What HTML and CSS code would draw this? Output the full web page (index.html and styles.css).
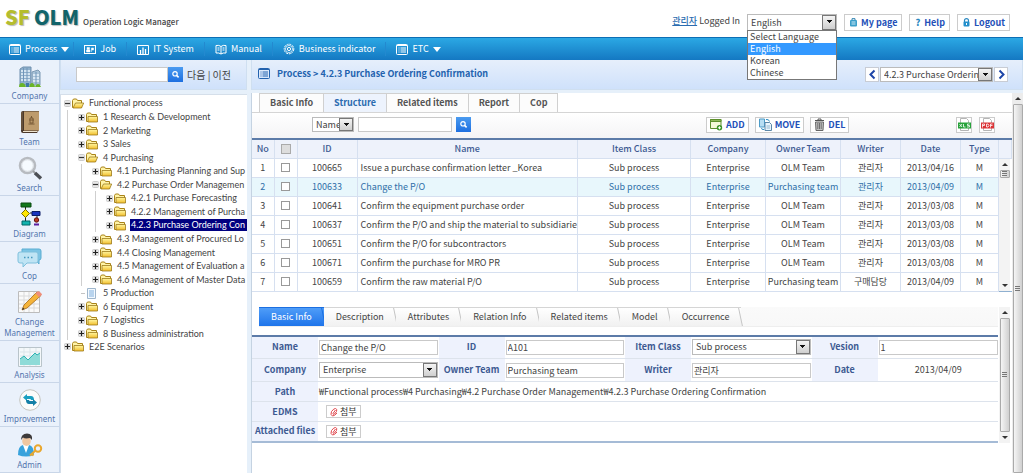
FILE: index.html
```html
<!DOCTYPE html>
<html lang="en">
<head>
<meta charset="utf-8">
<title>SF OLM - Operation Logic Manager</title>
<link rel="stylesheet" href="styles.css">
</head>
<body>
<svg class="defs" aria-hidden="true">
  <defs>
    <linearGradient id="gold" x1="0" y1="0" x2="0" y2="1"><stop offset="0" stop-color="#fff6a0"/><stop offset="1" stop-color="#f2bd2a"/></linearGradient>
  </defs>
  <symbol id="i-list" viewBox="0 0 12 11"><rect x=".5" y=".5" width="11" height="10" rx="1" fill="none" stroke="currentColor"/><path d="M1 1.5h10M2.5 4h1M2.5 6h1M2.5 8h1M4.500 4h5.500M4.500 6h5.500M4.500 8h5.500" stroke="currentColor" fill="none"/></symbol>
  <symbol id="i-job" viewBox="0 0 12 11"><rect x=".5" y="1.500" width="11" height="8" fill="none" stroke="currentColor"/><path d="M2.500 8V6h3.500v2zM3 3.500h2.500v2H3zM7.500 8V4h2v2h-2" fill="currentColor" stroke="currentColor" stroke-width=".5"/></symbol>
  <symbol id="i-it" viewBox="0 0 12 11"><path d="M.5 10.500V1.500H11.500V10.500z" fill="none" stroke="currentColor"/><path d="M3.500 10V6M6 10V3.500M8.500 10V5" stroke="currentColor" stroke-width="1.300"/></symbol>
  <symbol id="i-book" viewBox="0 0 12 11"><path d="M6 2.500Q4 .8 1 1.500V9Q4 8.500 6 10Q8 8.500 11 9V1.500Q8 .8 6 2.500V10M2.500 4h2M2.500 6h2M7.500 4h2M7.500 6h2" fill="none" stroke="currentColor"/></symbol>
  <symbol id="i-gear" viewBox="0 0 12 12"><circle cx="6" cy="6" r="4.800" fill="none" stroke="currentColor" stroke-dasharray="2 .8"/><circle cx="6" cy="6" r="3.600" fill="none" stroke="currentColor" stroke-width=".7"/><circle cx="6" cy="6" r="1.600" fill="none" stroke="currentColor"/></symbol>
  <symbol id="i-find" viewBox="0 0 15 15"><circle cx="7" cy="6.800" r="2.200" fill="none" stroke="#fff" stroke-width="1.200"/><path d="M8.600 8.400l2 2" stroke="#fff" stroke-width="1.500"/></symbol>
  <symbol id="i-folder" viewBox="0 0 12 11"><path d="M.5 9.500V2.500L1.500 1H4.500L5.500 2.500H10.500V9.500z" fill="#fff3a6" stroke="#a98318"/><path d="M2 4.500H11.500V10H2z" fill="url(#gold)" stroke="#9c7a1c" stroke-width=".8"/></symbol>
  <symbol id="i-open" viewBox="0 0 12 11"><path d="M.5 9.500V2.500L1.500 1H4.500L5.500 2.500H9.500V9.500z" fill="#fff3a6" stroke="#a98318"/><path d="M1 10L3.500 5H11.700L9.500 10z" fill="url(#gold)" stroke="#9c7a1c" stroke-width=".8"/></symbol>
  <symbol id="i-doc" viewBox="0 0 12 11"><path d="M1.500.5h8v10h-8z" fill="#f3f9ff" stroke="#9fb6cc"/><path d="M3 2h5v7H3z" fill="#b9d4ee"/></symbol>
  <symbol id="i-plus" viewBox="0 0 7 7"><rect x=".5" y=".5" width="6" height="6" rx="1" fill="#e8e8e8" stroke="#ccc"/><path d="M1 3.500h5M3.500 1v5" stroke="#222" stroke-width="1.200"/></symbol>
  <symbol id="i-minus" viewBox="0 0 7 7"><rect x=".5" y=".5" width="6" height="6" rx="1" fill="#e8e8e8" stroke="#ccc"/><path d="M1 3.500h5" stroke="#333" stroke-width="1.200"/></symbol>
  <symbol id="i-clip" viewBox="0 0 8 10"><path d="M5.500 3L3 6.500Q3 8 4.500 7L6.500 4.500Q7.500 2 5.500 1.500Q4 1.200 1.500 4.500Q0 8 2.500 9Q4.500 9 7 6" fill="none" stroke="#e0474d" stroke-width="1"/></symbol>
</svg>

<header class="top">
  <h1 class="logo"><span class="logo-sf">SF</span> <span class="logo-olm">OLM</span> <small>Operation Logic Manager</small></h1>
  <div class="account">
    <p class="user"><a href="#">관리자</a> Logged In</p>
    <div class="pick lang">
      <select aria-label="Language"><option>English</option><option>Select Language</option><option>Korean</option><option>Chinese</option></select>
      <ul class="menu"><li>Select Language</li><li class="on">English</li><li>Korean</li><li>Chinese</li></ul>
    </div>
    <button class="btn"><svg viewBox="0 0 9 9" width="9" height="9"><rect x="1" y="2" width="7" height="6.500" rx="1" fill="#3b9fca"/><path d="M3 2V.7h3V2" fill="none" stroke="#287fae"/><path d="M2.500 4h4M2.500 6h4" stroke="#cdeaf6"/></svg>My page</button>
    <button class="btn help"><b class="q">?</b>Help</button>
    <button class="btn"><svg viewBox="0 0 9 9" width="9" height="9"><path d="M2.500 4V2.500Q2.500 .7 4.500 .7T6.500 2.500V4" fill="none" stroke="#2a87c0" stroke-width="1.200"/><rect x="1.500" y="3.500" width="6" height="5" rx="1" fill="#2490cc"/><path d="M4.500 5v2" stroke="#fff"/></svg>Logout</button>
  </div>
</header>

<nav class="nav">
  <a href="#"><svg width="12" height="11"><use href="#i-list"/></svg>Process<i class="caret"></i></a>
  <a href="#"><svg width="12" height="11"><use href="#i-job"/></svg>Job</a>
  <a href="#"><svg width="12" height="11"><use href="#i-it"/></svg>IT System</a>
  <a href="#"><svg width="12" height="11"><use href="#i-book"/></svg>Manual</a>
  <a href="#"><svg width="12" height="12"><use href="#i-gear"/></svg>Business indicator</a>
  <a href="#"><svg width="12" height="11"><use href="#i-list"/></svg>ETC<i class="caret"></i></a>
</nav>

<div class="body">
  <aside class="side">
    <a href="#"><svg width="24" height="22" viewBox="0 0 24 22"><path d="M2 3L5 1H13V19H2z" fill="#8fb0cc" stroke="#6f8fae"/><path d="M14 6L20 4L22 6V19H14z" fill="#a9c3d8" stroke="#7d9ab4"/><path d="M3 5h9M3 8h9M3 11h9M3 14h9M15 9h6M15 12h6M15 15h6" stroke="#eaf5fd" stroke-width="1.500"/><path d="M5.500 2v14M9 2v14M18 6v12" stroke="#6f94b8"/><path d="M1 21q0-4 3-4t4 4zM11 21q1-4 3-4t3 4zM17 21q1-3 3-3t3 3z" fill="#6ab529"/><path d="M8 17h3v4H8z" fill="#3f78a8"/></svg>Company</a>
    <a href="#"><svg width="22" height="24" viewBox="0 0 22 24"><path d="M2 3Q2 1 4 1H20V20L18 23H4Q2 23 2 21z" fill="#4a382a"/><path d="M5 1.500H20V20.500H5z" fill="#bd9b6d"/><path d="M3 2v18" stroke="#80694d"/><path d="M4 21.500H18.500" stroke="#efe5d0"/><path d="M12.500 6v2M10 10h5M11 8h3v5h-3zM9.500 14h6" stroke="#765936" fill="none"/></svg>Team</a>
    <a href="#"><svg width="26" height="24" viewBox="0 0 26 24"><circle cx="10.500" cy="9.500" r="7.500" fill="#f6fbff" stroke="#b7bbc0" stroke-width="2.600"/><circle cx="10.500" cy="9.500" r="5.800" fill="none" stroke="#d9dde2"/><path d="M16 15l3 3" stroke="#9a9da0" stroke-width="2"/><path d="M18 17l6 5.500" stroke="#4c4f54" stroke-width="3.400"/></svg>Search</a>
    <a href="#"><svg width="22" height="24" viewBox="0 0 22 24"><path d="M6.500 4v16M11 11h7v9" fill="none" stroke="#222"/><path d="M2 1h10v4H2z" fill="#11771a" stroke="#0a4a10"/><path d="M6.500 7.500L10.500 11.500L6.500 15.500L2.500 11.500z" fill="#ffe600" stroke="#776c00"/><path d="M13 9.500h8v4h-8z" fill="#1834c0" stroke="#0a1a66"/><path d="M3 19h8v4H3z" fill="#12b3ae" stroke="#066"/><circle cx="17.500" cy="18" r="2.200" fill="#b83a22" stroke="#611"/><path d="M15 21.500h5v2h-5z" fill="#5a1fa0"/></svg>Diagram</a>
    <a href="#"><svg width="26" height="20" viewBox="0 0 26 20"><path d="M5 1H22Q24 1 24 3V10Q24 12 22 12V16L18 12H5z" fill="#7cc4e4" stroke="#5badd2"/><path d="M3 4H19Q21 4 21 6V13Q21 15 19 15H10L6 19V15H3Q1 15 1 13V6Q1 4 3 4z" fill="#bfe4f4" stroke="#7fc0dc"/><path d="M7 9.500h1.500M10.500 9.500h1.500M14 9.500h1.500" stroke="#4698bd" stroke-width="1.600"/></svg>Cop</a>
    <a href="#"><svg width="26" height="24" viewBox="0 0 26 24"><path d="M1.500 1.500h21v21h-21z" fill="#fafafa" stroke="#bcbcbc"/><path d="M2 6h20M2 10h20M2 14h20M2 18h20M7 2v20M12 2v20M17 2v20" stroke="#dadada"/><path d="M5 20L7 15L20 2L24 5.500L10 18z" fill="#f5b43a" stroke="#a66a1a" stroke-width=".8"/><path d="M18.500 3.500L20.500 1.500Q22 .8 24 3T24 5.500L22 7z" fill="#ef8e7c"/><path d="M5 20l1-2.500l1.500 1.500z" fill="#333"/></svg>Change Management</a>
    <a href="#"><svg width="24" height="20" viewBox="0 0 24 20"><path d="M.5 .5h23v19H.5z" fill="#f4f8fa" stroke="#b9c4ca"/><path d="M2 5h20M2 9h20M6 1v18M12 1v18M18 1v18" stroke="#dbe5ea"/><path d="M2 18V12L6 9L10 13L17 6L19 8L22 6V18z" fill="#8edbd8"/><path d="M2 12L6 9L10 13L17 6L19 8L22 6" fill="none" stroke="#2eb2b2"/></svg>Analysis</a>
    <a href="#"><svg width="24" height="22" viewBox="0 0 24 22"><circle cx="12" cy="11" r="10.300" fill="#fcfcfa" stroke="#c5c5bf"/><path d="M5 8.500L9 5V7H13Q16 7 16 11H13Q13 10 12 10H9V12z" fill="#1ba0c0"/><path d="M19 13.500L15 17V15H11Q8 15 8 11H11Q11 12 12 12H15V10z" fill="#147fa6"/></svg>Improvement</a>
    <a href="#"><svg width="26" height="24" viewBox="0 0 26 24"><path d="M1 22Q1 13 6 12H12Q17 13 17 22Q9 25 1 22z" fill="#38a2dc"/><path d="M6 12L9 20L12 12z" fill="#fff"/><ellipse cx="9.500" cy="8" rx="4.300" ry="5" fill="#f1c7a0"/><path d="M4 7Q4 .5 10 .5T15 7L13 5Q8 6 6 4.500z" fill="#3d3a3a"/><circle cx="21" cy="15.500" r="3.200" fill="none" stroke="#e9a72e" stroke-width="2"/><path d="M18.500 17.500L13 22.500M15 21l1.500 1.500" stroke="#e9a72e" stroke-width="2"/></svg>Admin</a>
  </aside>

  <section class="explorer">
    <form class="bar tree-find">
      <input type="text" aria-label="Find in tree"><button class="find" type="button" aria-label="Find"><svg width="15" height="15"><use href="#i-find"/></svg></button>
      <span class="steps"><a href="#">다음</a> | <a href="#">이전</a></span>
    </form>
    <div class="tree">
      <ul>
        <li><div class="node"><svg class="tw"><use href="#i-minus"/></svg><svg class="fd"><use href="#i-open"/></svg><span>Functional process</span></div>
          <ul>
            <li><div class="node"><svg class="tw"><use href="#i-plus"/></svg><svg class="fd"><use href="#i-folder"/></svg><span>1 Research &amp; Development</span></div></li>
            <li><div class="node"><svg class="tw"><use href="#i-plus"/></svg><svg class="fd"><use href="#i-folder"/></svg><span>2 Marketing</span></div></li>
            <li><div class="node"><svg class="tw"><use href="#i-plus"/></svg><svg class="fd"><use href="#i-folder"/></svg><span>3 Sales</span></div></li>
            <li><div class="node"><svg class="tw"><use href="#i-minus"/></svg><svg class="fd"><use href="#i-open"/></svg><span>4 Purchasing</span></div>
              <ul>
                <li><div class="node"><svg class="tw"><use href="#i-plus"/></svg><svg class="fd"><use href="#i-folder"/></svg><span>4.1 Purchasing Planning and Sup</span></div></li>
                <li><div class="node"><svg class="tw"><use href="#i-minus"/></svg><svg class="fd"><use href="#i-open"/></svg><span>4.2 Purchase Order Managemen</span></div>
                  <ul>
                    <li><div class="node"><svg class="tw"><use href="#i-plus"/></svg><svg class="fd"><use href="#i-folder"/></svg><span>4.2.1 Purchase Forecasting</span></div></li>
                    <li><div class="node"><svg class="tw"><use href="#i-plus"/></svg><svg class="fd"><use href="#i-folder"/></svg><span>4.2.2 Management of Purcha</span></div></li>
                    <li><div class="node"><svg class="tw"><use href="#i-plus"/></svg><svg class="fd"><use href="#i-folder"/></svg><span class="sel">4.2.3 Purchase Ordering Con</span></div></li>
                  </ul>
                </li>
                <li><div class="node"><svg class="tw"><use href="#i-plus"/></svg><svg class="fd"><use href="#i-folder"/></svg><span>4.3 Management of Procured Lo</span></div></li>
                <li><div class="node"><svg class="tw"><use href="#i-plus"/></svg><svg class="fd"><use href="#i-folder"/></svg><span>4.4 Closing Management</span></div></li>
                <li><div class="node"><svg class="tw"><use href="#i-plus"/></svg><svg class="fd"><use href="#i-folder"/></svg><span>4.5 Management of Evaluation a</span></div></li>
                <li><div class="node"><svg class="tw"><use href="#i-plus"/></svg><svg class="fd"><use href="#i-folder"/></svg><span>4.6 Management of Master Data</span></div></li>
              </ul>
            </li>
            <li><div class="node"><svg class="tw" viewBox="0 0 7 7"><path d="M3 3.500h4" stroke="#c4c4c4"/></svg><svg class="fd"><use href="#i-doc"/></svg><span>5 Production</span></div></li>
            <li><div class="node"><svg class="tw"><use href="#i-plus"/></svg><svg class="fd"><use href="#i-folder"/></svg><span>6 Equipment</span></div></li>
            <li><div class="node"><svg class="tw"><use href="#i-plus"/></svg><svg class="fd"><use href="#i-folder"/></svg><span>7 Logistics</span></div></li>
            <li><div class="node"><svg class="tw"><use href="#i-plus"/></svg><svg class="fd"><use href="#i-folder"/></svg><span>8 Business administration</span></div></li>
          </ul>
        </li>
        <li><div class="node"><svg class="tw"><use href="#i-plus"/></svg><svg class="fd"><use href="#i-folder"/></svg><span>E2E Scenarios</span></div></li>
      </ul>
    </div>
  </section>

  <main class="main">
    <div class="bar crumb">
      <h2><svg width="12" height="11"><use href="#i-list"/></svg>Process &gt; 4.2.3 Purchase Ordering Confirmation</h2>
      <div class="pager">
        <button class="arrow" aria-label="Previous"><svg width="9" height="11" viewBox="0 0 9 11"><path d="M6.500 1.500L2.500 5.500L6.500 9.500" fill="none" stroke="#1d45a8" stroke-width="2"/></svg></button>
        <div class="pick item-pick"><select aria-label="Item"><option>4.2.3 Purchase Ordering Confirmation</option></select></div>
        <button class="arrow" aria-label="Next"><svg width="9" height="11" viewBox="0 0 9 11"><path d="M2.500 1.500L6.500 5.500L2.500 9.500" fill="none" stroke="#1d45a8" stroke-width="2"/></svg></button>
      </div>
    </div>

    <div class="work">
      <div class="content">
        <div class="tabs" role="tablist">
          <button role="tab">Basic Info</button><button role="tab" class="on" aria-selected="true">Structure</button><button role="tab">Related items</button><button role="tab">Report</button><button role="tab">Cop</button>
        </div>
        <div class="tools">
          <div class="search">
            <div class="pick field"><select aria-label="Search field"><option>Name</option></select></div>
            <input type="text" aria-label="Search text">
            <button class="find" aria-label="Search"><svg width="15" height="15"><use href="#i-find"/></svg></button>
          </div>
          <div class="actions">
            <button class="btn"><svg width="13" height="13" viewBox="0 0 13 13"><path d="M.5 1.500h10.500v9H.5z" fill="#f4f8d8" stroke="#5d8f2c"/><path d="M.5 1.500h10.500v2H.5z" fill="#8fb85a" stroke="#5d8f2c"/><circle cx="9.500" cy="9.800" r="2.700" fill="#3c9428"/><path d="M8 9.800h3M9.500 8.300v3" stroke="#fff"/></svg>ADD</button>
            <button class="btn"><svg width="13" height="13" viewBox="0 0 13 13"><path d="M.5 1h5v8h-5z" fill="#b7def3" stroke="#4d9bc7"/><path d="M6 4.500h4.500L12.500 6.500V12.500H6z" fill="#eaf5fc" stroke="#5b87a8"/><path d="M7 1.500Q10 1 10.500 3.500M5 11.500Q2.500 12 2.500 10" stroke="#2d8fc4" fill="none"/><path d="M7.500 8h3.500M7.500 10h3.500" stroke="#92b7cf"/></svg>MOVE</button>
            <button class="btn"><svg width="11" height="13" viewBox="0 0 11 13"><path d="M1 2.500h9M4 2V1h3v1" stroke="#555" fill="none"/><path d="M1.500 4h8L9 12.500H2z" fill="#c2c2c2" stroke="#666"/><path d="M3.800 5v6M5.500 5v6M7.200 5v6" stroke="#707070"/></svg>DEL</button>
          </div>
          <div class="export">
            <button class="btn" aria-label="Export XLS"><svg width="13" height="13" viewBox="0 0 13 13"><path d="M2.500.5h6l2 2V12.500h-8z" fill="#fff" stroke="#b5b5b5"/><path d="M0 4.500h13v6H0z" fill="#27a23a"/><path d="M1.500 6l2.500 3M4 6l-2.500 3M5.500 6v3h2M11.500 6H9.500v1.500h2V9H9" stroke="#fff" stroke-width=".8" fill="none"/></svg></button>
            <button class="btn" aria-label="Export PDF"><svg width="13" height="13" viewBox="0 0 13 13"><path d="M2.500.5h6l2 2V12.500h-8z" fill="#fff" stroke="#b5b5b5"/><path d="M0 4.500h13v6H0z" fill="#db3236"/><path d="M1.500 9.500V6h2v1.500h-2M5.500 6v3h1.500l1-1.500L7 6zM9.500 9.500V6h2M9.500 7.500h2" stroke="#fff" stroke-width=".8" fill="none"/></svg></button>
          </div>
        </div>

        <table class="grid">
          <colgroup><col class="w-no"><col class="w-check"><col class="w-id"><col><col class="w-class"><col class="w-co"><col class="w-co"><col class="w-writer"><col class="w-writer"><col class="w-type"><col class="w-bar"></colgroup>
          <thead><tr><th>No</th><th><input type="checkbox" class="all" aria-label="Select all"></th><th>ID</th><th>Name</th><th>Item Class</th><th>Company</th><th>Owner Team</th><th>Writer</th><th>Date</th><th>Type</th><th></th></tr></thead>
          <tbody>
            <tr><td>1</td><td><input type="checkbox" aria-label="Row 1"></td><td>100665</td><td class="name">Issue a purchase confirmation letter _Korea</td><td>Sub process</td><td>Enterprise</td><td>OLM Team</td><td>관리자</td><td>2013/04/16</td><td>M</td>
              <td class="bar-cell" rowspan="7"><div class="scroll"><i class="up"></i><i class="thumb short"></i><i class="down"></i></div></td></tr>
            <tr class="on"><td>2</td><td><input type="checkbox" aria-label="Row 2"></td><td>100633</td><td class="name">Change the P/O</td><td>Sub process</td><td>Enterprise</td><td>Purchasing team</td><td>관리자</td><td>2013/04/09</td><td>M</td></tr>
            <tr><td>3</td><td><input type="checkbox" aria-label="Row 3"></td><td>100641</td><td class="name">Confirm the equipment purchase order</td><td>Sub process</td><td>Enterprise</td><td>OLM Team</td><td>관리자</td><td>2013/03/08</td><td>M</td></tr>
            <tr><td>4</td><td><input type="checkbox" aria-label="Row 4"></td><td>100637</td><td class="name">Confirm the P/O and ship the material to subsidiarie</td><td>Sub process</td><td>Enterprise</td><td>OLM Team</td><td>관리자</td><td>2013/03/08</td><td>M</td></tr>
            <tr><td>5</td><td><input type="checkbox" aria-label="Row 5"></td><td>100651</td><td class="name">Confirm the P/O for subcontractors</td><td>Sub process</td><td>Enterprise</td><td>OLM Team</td><td>관리자</td><td>2013/03/08</td><td>M</td></tr>
            <tr><td>6</td><td><input type="checkbox" aria-label="Row 6"></td><td>100671</td><td class="name">Confirm the purchase for MRO PR</td><td>Sub process</td><td>Enterprise</td><td>OLM Team</td><td>관리자</td><td>2013/03/08</td><td>M</td></tr>
            <tr><td>7</td><td><input type="checkbox" aria-label="Row 7"></td><td>100659</td><td class="name">Confirm the raw material P/O</td><td>Sub process</td><td>Enterprise</td><td>Purchasing team</td><td>구매담당</td><td>2013/04/09</td><td>M</td></tr>
          </tbody>
        </table>

        <div class="detail">
          <div class="detail-body">
            <div class="subtabs" role="tablist">
              <button role="tab" class="on" aria-selected="true">Basic Info</button><button role="tab">Description</button><button role="tab">Attributes</button><button role="tab">Relation Info</button><button role="tab">Related items</button><button role="tab">Model</button><button role="tab">Occurrence</button>
            </div>
            <table class="form">
              <tbody>
                <tr class="tall"><th><label for="f-name">Name</label></th><td><input id="f-name" type="text" value="Change the P/O"></td><th><label for="f-id">ID</label></th><td><input id="f-id" type="text" value="A101"></td><th><label for="f-class">Item Class</label></th><td><div class="pick"><select id="f-class"><option>Sub process</option></select></div></td><th><label for="f-ver">Vesion</label></th><td><input id="f-ver" type="text" value="1"></td></tr>
                <tr class="tall"><th><label for="f-co">Company</label></th><td><div class="pick"><select id="f-co"><option>Enterprise</option></select></div></td><th><label for="f-team">Owner Team</label></th><td><input id="f-team" type="text" value="Purchasing team"></td><th><label for="f-writer">Writer</label></th><td><input id="f-writer" type="text" value="관리자"></td><th>Date</th><td class="mid">2013/04/09</td></tr>
                <tr><th>Path</th><td colspan="7">₩Functional process₩4 Purchasing₩4.2 Purchase Order Management₩4.2.3 Purchase Ordering Confirmation</td></tr>
                <tr><th>EDMS</th><td colspan="7"><button class="attach"><svg width="8" height="10"><use href="#i-clip"/></svg>첨부</button></td></tr>
                <tr><th>Attached files</th><td colspan="7"><button class="attach"><svg width="8" height="10"><use href="#i-clip"/></svg>첨부</button></td></tr>
              </tbody>
            </table>
          </div>
          <div class="scroll"><i class="up"></i><i class="thumb"></i><i class="down"></i></div>
        </div>
      </div>
      <div class="scroll outer"><i class="up"></i><i class="thumb"></i></div>
    </div>
  </main>
</div>
</body>
</html>
```

FILE: styles.css
```css
* { box-sizing: border-box; }
body {
  margin: 0;
  min-height: 100vh;
  display: flex;
  flex-direction: column;
  overflow: hidden;
  background: #fff;
  color: #444;
  font: 9px/14px "Noto Sans CJK KR", sans-serif;
}
h1, h2, p, ul { margin: 0; padding: 0; }
ul { list-style: none; }
a { color: inherit; text-decoration: none; }
svg { flex: none; display: block; }
.defs { position: absolute; width: 0; height: 0; }
button, input, select { font: inherit; color: inherit; margin: 0; border-radius: 0; }
button { padding: 0; cursor: pointer; }
input[type="text"] { height: 15px; padding: 0 1px; border: 1px solid #c9c9c9; background: #fff; min-width: 0; }

/* drop-down */
.pick { position: relative; height: 16px; }
.pick select {
  width: 100%;
  height: 100%;
  padding: 0 10px 0 3px;
  border: 1px solid #bbb;
  background: #fff;
  appearance: none;
  line-height: 14px;
}
.pick::after {
  content: "";
  position: absolute;
  top: 1px;
  right: 1px;
  bottom: 1px;
  width: 12px;
  border: 1px solid #777;
  background: linear-gradient(#111, #111) center 4px / 5px 1px no-repeat, linear-gradient(#111, #111) center 5px / 3px 1px no-repeat, linear-gradient(#111, #111) center 6px / 1px 1px no-repeat, linear-gradient(#f4f4f4, #cfcfcf);
  pointer-events: none;
}

/* header */
.top { display: flex; align-items: flex-start; justify-content: space-between; height: 37px; padding: 0 13px 0 5px; }
.logo { display: flex; align-items: baseline; gap: 4px; font-size: 20px; line-height: 34px; font-weight: 900; text-shadow: 1px 1px 1px #bbb; }
.logo-sf { color: #b5bd2e; }
.logo-olm { color: #12646a; }
.logo small { font-size: 8px; font-weight: 500; color: #444; text-shadow: none; }
.account { display: flex; gap: 7px; padding-top: 14px; }
.user a { color: #2b6cb0; font-weight: 500; text-decoration: underline; }
.lang { width: 90px; height: 17px; }
.menu {
  position: absolute;
  z-index: 2;
  top: 16px;
  left: 0;
  right: 0;
  border: 1px solid #777;
  background: #fff;
  line-height: 12px;
}
.menu li { padding: 0 2px; }
.menu .on { background: #3399ff; color: #fff; }
.btn {
  display: flex;
  align-items: center;
  gap: 3px;
  height: 17px;
  padding: 0 4px;
  border: 1px solid #ccc;
  background: #fff;
  color: #2450b8;
  font-weight: 700;
}
.help { gap: 4px; padding: 0 4px 0 5px; }
.q { color: #2a87c0; }

/* main menu */
.nav {
  display: flex;
  align-items: center;
  height: 23px;
  border-top: 1px solid #0d6fb5;
  background: linear-gradient(#2ba8e4, #1478c2);
  color: #fff;
}
.nav a { display: flex; align-items: center; gap: 4px; height: 14px; padding: 0 10px; border-right: 1px solid #2389cf; }
.nav a:first-child { padding: 0 4px 0 9px; }
.nav a:last-child { border: 0; }
.caret { border: 4px solid transparent; border-top: 5px solid #fff; border-bottom: 0; }

/* frame */
.body { flex: 1; display: grid; grid-template-columns: 60px 187px minmax(0, 1fr); background: #e6f0fa; }
.bar { display: flex; align-items: center; height: 30px; border: 1px solid #cfdff0; border-top: 0; background: linear-gradient(#e6effb, #cfe1fb); }

.side { background: #eaf1fb; border-right: 1px solid #c9d8ec; }
.side a {
  display: flex;
  flex-direction: column;
  align-items: center;
  gap: 2px;
  padding: 6px 4px 2px;
  border-bottom: 1px solid #c9d6e8;
  color: #5275ad;
  font: 8px/11px "Noto Sans", sans-serif;
  text-align: center;
}

/* tree */
.explorer { display: flex; flex-direction: column; min-width: 0; }
.tree-find { padding: 0 0 0 15px; }
.tree-find input { width: 92px; }
.find { width: 15px; height: 15px; border: 0; background: linear-gradient(#4b9bf0, #1d6fe0); }
.steps { padding-left: 4px; font-size: 10px; }
.tree { flex: 1; margin-top: 4px; padding: 1px 0 0 3px; overflow: hidden; background: #fff; border: 1px solid #d5dfea; border-width: 1px 0 0 1px; font-family: Lato, sans-serif; }
.tree ul ul { margin-left: 3px; padding-left: 10px; border-left: 1px solid #cfcfcf; }
.tree li:last-child > ul { border-color: transparent; }
.node { display: flex; align-items: center; height: 14px; white-space: nowrap; }
.tree li:nth-child(even) > .node { height: 13px; }
.tw { width: 7px; height: 7px; }
.fd { width: 12px; height: 11px; margin: 0 4px 0 1px; }
.node span { flex: 1; padding: 0 1px; line-height: 12px; }
.node .sel { background: #000080; color: #fff; }

/* work area */
.main { display: flex; flex-direction: column; padding-left: 4px; }
.crumb { justify-content: space-between; padding: 0 14px 0 6px; }
.crumb h2 { display: flex; align-items: center; gap: 7px; padding-bottom: 2px; color: #2362ae; font-size: 9px; font-weight: 700; }
.pager { display: flex; gap: 1px; }
.arrow { display: grid; place-items: center; width: 14px; height: 15px; border: 1px solid #c8ccd4; background: #fff; }
.item-pick { width: 113px; height: 15px; }
.work { flex: 1; display: flex; margin-top: 3px; border-left: 1px solid #c5d3e2; background: #fff; }
.content { flex: 1; min-width: 0; }
.tabs { display: flex; height: 20px; padding-left: 7px; border-bottom: 1px solid #d5d5d5; }
.tabs button { padding: 0 10px; border: 1px solid #d0d0d0; border-width: 1px 1px 0 0; background: #fcfcfc; color: #555; font-weight: 700; }
.tabs button:first-child { border-left-width: 1px; }
.tabs .on { background: #edf3fd; color: #2b6cb0; }
.tools { display: flex; align-items: center; height: 25px; padding: 0 17px 2px 60px; background: linear-gradient(#fff, #f4f4f6); }
.search { display: flex; align-items: center; gap: 4px; width: 394px; }
.search input { width: 94px; }
.field { width: 42px; height: 15px; }
.actions { display: flex; gap: 6px; margin-right: auto; }
.actions .btn { height: 16px; padding: 0 3px; }
.export { display: flex; gap: 7px; }
.export .btn { height: 16px; width: 16px; padding: 0 1px; }

.grid { width: 100%; table-layout: fixed; border-collapse: collapse; border-top: 2px solid #5c7ba8; border-bottom: 1px solid #8fb0d0; }
.w-no { width: 22px; }
.w-check { width: 23px; }
.w-id { width: 60px; }
.w-class { width: 113px; }
.w-co { width: 75px; }
.w-writer { width: 60px; }
.w-type { width: 38px; }
.w-bar { width: 13px; }
.grid th, .grid td { height: 19px; padding: 0; border: 1px solid #d6e0f0; line-height: 14px; text-align: center; white-space: nowrap; overflow: hidden; }
.grid th:first-child, .grid td:first-child { border-left: 0; }
.grid th { background: #eef2fb; color: #3d5a92; font-weight: 500; }
.grid .name { padding-left: 3px; text-align: left; }
.grid .on { background: #e8f7fc; color: #2f6fa8; }
.grid input { appearance: none; display: block; width: 9px; height: 9px; margin: auto; border: 1px solid #999; background: #fff; }
.grid .all { width: 10px; height: 10px; background: #ddd; border-color: #aaa; }
.grid .bar-cell { height: 1px; border: 0; vertical-align: top; }

/* scroll bars */
.scroll { display: flex; flex-direction: column; align-items: center; gap: 4px; width: 11px; padding: 4px 0; background: #f3f3f3; }
.up, .down { border: 3px solid transparent; }
.up { border-top: 0; border-bottom-color: #333; }
.down { border-bottom: 0; border-top-color: #333; }
.thumb {
  flex: 1;
  width: 10px;
  border: 1px solid #aaa;
  border-radius: 1px;
  background: linear-gradient(#777, #777) center calc(50% - 2px) / 5px 1px no-repeat, linear-gradient(#777, #777) center / 5px 1px no-repeat, linear-gradient(#777, #777) center calc(50% + 2px) / 5px 1px no-repeat, linear-gradient(90deg, #f5f5f5, #d0d0d0);
}
.short { flex: 0 0 8px; margin-bottom: auto; }
.bar-cell .scroll { height: 100%; }
.outer { padding-bottom: 0; background: #ececec; }

/* detail */
.detail { display: flex; padding: 15px 2px 0 0; }
.detail-body { flex: 1; min-width: 0; margin-right: 1px; }
.subtabs { display: flex; height: 20px; margin: 0 0 8px 7px; border-bottom: 1px solid #eee; background: linear-gradient(#fafafa, #f8f8f8); }
.subtabs button { position: relative; z-index: 0; padding: 0 12px; border: 0; border-top: 1px solid #d5d5d5; background: linear-gradient(#fff, #f1f1f1); color: #444; }
.subtabs button::after { content: ""; position: absolute; z-index: 1; top: 0; right: 0; bottom: 0; width: 5px; border-right: 1px solid #c4c4c4; background: linear-gradient(#fff, #f1f1f1); transform: skewX(12deg); }
.subtabs .on { border-color: #1c6fe0; background: linear-gradient(#4f9df8, #1f74ea); color: #fff; }
.subtabs .on::after { background: linear-gradient(#4f9df8, #1f74ea); border-color: #1c6fe0; }
.form { width: 100%; table-layout: fixed; border-collapse: collapse; border-top: 2px solid #5c7ba8; border-bottom: 2px solid #a5bbd6; }
.form th, .form td { height: 20px; padding: 0 1px; border-bottom: 1px solid #dde3ec; line-height: 14px; white-space: nowrap; }
.form th { width: 66px; padding: 0; background: #eef2fd; color: #3d5a92; font-weight: 700; }
.form .tall th, .form .tall td { height: 23px; }
.form .tall input { display: block; width: 100%; }
.form td:last-child { padding-right: 0; }
.form .mid { text-align: center; }
.attach { display: flex; align-items: center; gap: 2px; height: 13px; margin-left: 7px; padding: 0 3px; border: 1px solid #ccc; background: #fff; color: #333; line-height: 11px; }
```
